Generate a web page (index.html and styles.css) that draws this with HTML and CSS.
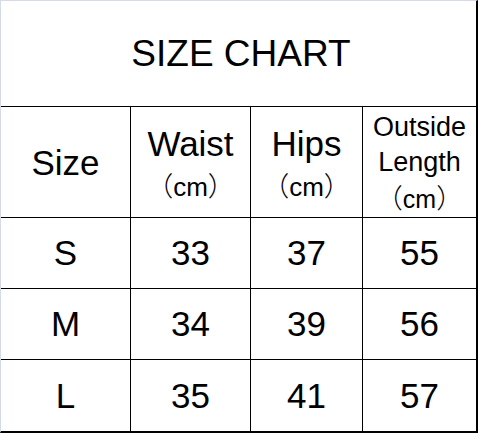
FILE: index.html
```html
<!DOCTYPE html>
<html>
<head>
<meta charset="utf-8">
<link rel="stylesheet" href="styles.css">
</head>
<body>
<div class="chart">
  <div class="cell title">SIZE CHART</div>
  <div class="cell head"><span class="big">Size</span></div>
  <div class="cell head pair"><span class="big">Waist</span><span class="unit"><span class="paren">（</span>cm<span class="paren">）</span></span></div>
  <div class="cell head pair"><span class="big">Hips</span><span class="unit"><span class="paren">（</span>cm<span class="paren">）</span></span></div>
  <div class="cell head small"><span class="mid">Outside</span><span class="mid">Length</span><span class="unit"><span class="paren">（</span>cm<span class="paren">）</span></span></div>
  <div class="cell num">S</div><div class="cell num">33</div><div class="cell num">37</div><div class="cell num">55</div>
  <div class="cell num">M</div><div class="cell num">34</div><div class="cell num">39</div><div class="cell num">56</div>
  <div class="cell num">L</div><div class="cell num">35</div><div class="cell num">41</div><div class="cell num">57</div>
</div>
</body>
</html>
```
FILE: styles.css
```css
html, body {
  margin: 0;
  padding: 0;
  background: #ffffff;
}
.chart {
  width: 478px;
  height: 433px;
  box-sizing: border-box;
  border-left: 1px solid #d4dbe7;
  border-top: 1px solid #d4dbe7;
  border-right: 2px solid #000;
  border-bottom: 2px solid #000;
  display: grid;
  grid-template-columns: 129px 119px 111px 113px;
  grid-template-rows: 105px 110px 70px 70px 71px;
  gap: 1px;
  background: #000;
  font-family: "Liberation Sans", Arial, "Noto Sans CJK SC", sans-serif;
  color: #000;
}
.cell {
  background: #fff;
  display: flex;
  flex-direction: column;
  align-items: center;
  justify-content: center;
}
.title {
  grid-column: 1 / 5;
  font-size: 37px;
  padding-left: 5px;
}
.big {
  font-size: 35px;
  line-height: 37px;
}
.unit {
  font-size: 26px;
  line-height: 37px;
  padding-top: 4px;
}
.pair {
  padding-top: 6px;
}
.paren {
  font-family: "Noto Sans CJK SC", sans-serif;
  font-weight: 300;
  font-size: 27px;
}
.mid {
  font-size: 27px;
  line-height: 35px;
}
.small {
  padding-top: 2px;
}
.small .unit {
  font-size: 25px;
  line-height: 33px;
  padding-top: 0;
}
.num {
  font-size: 35px;
}
```
